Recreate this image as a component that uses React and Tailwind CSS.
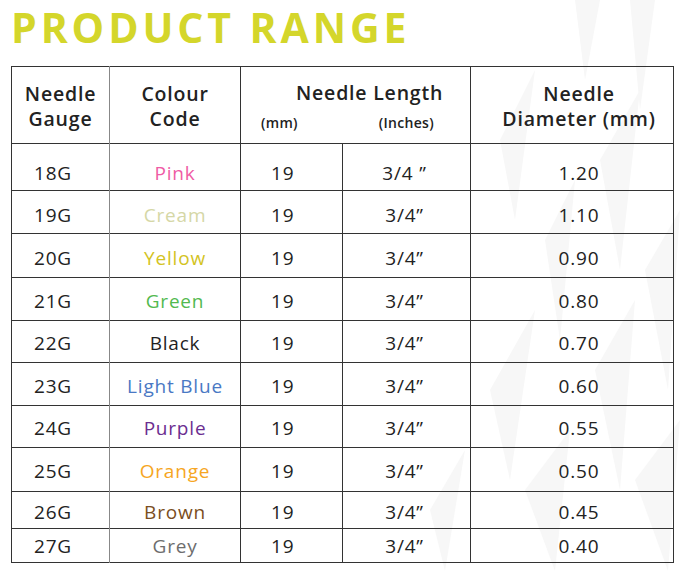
import React from "react";

const rows = [
  { gauge: "18G", colour: "Pink", color: "text-[#ef5ba5]", inch: "3/4 ”", dia: "1.20", h: "h-[47px]", pt: "pt-[12px]" },
  { gauge: "19G", colour: "Cream", color: "text-[#d5d7a6]", inch: "3/4”", dia: "1.10", h: "h-[43px]", pt: "pt-[6px]" },
  { gauge: "20G", colour: "Yellow", color: "text-[#d3c323]", inch: "3/4”", dia: "0.90", h: "h-[44px]", pt: "pt-[6px]" },
  { gauge: "21G", colour: "Green", color: "text-[#52b94f]", inch: "3/4”", dia: "0.80", h: "h-[43px]", pt: "pt-[4px]" },
  { gauge: "22G", colour: "Black", color: "text-[#1f1f1f]", inch: "3/4”", dia: "0.70", h: "h-[42px]", pt: "pt-[4px]" },
  { gauge: "23G", colour: "Light Blue", color: "text-[#4a78c4]", inch: "3/4”", dia: "0.60", h: "h-[43px]", pt: "pt-[4px]" },
  { gauge: "24G", colour: "Purple", color: "text-[#6b2d90]", inch: "3/4”", dia: "0.55", h: "h-[42px]", pt: "pt-[4px]" },
  { gauge: "25G", colour: "Orange", color: "text-[#f6a623]", inch: "3/4”", dia: "0.50", h: "h-[44px]", pt: "pt-[4px]" },
  { gauge: "26G", colour: "Brown", color: "text-[#7a4e21]", inch: "3/4”", dia: "0.45", h: "h-[37px]", pt: "pt-[4px]" },
  { gauge: "27G", colour: "Grey", color: "text-[#6d6d6d]", inch: "3/4”", dia: "0.40", h: "h-[34px]", pt: "pt-[1px]" },
];

// faint slanted streaks behind the table
const Backdrop = () => (
  <svg className="absolute inset-0 w-full h-full" viewBox="0 0 680 571" preserveAspectRatio="none">
    <g fill="#f7f7f7">
      <polygon points="575,0 600,0 585,80" />
      <polygon points="630,0 655,0 640,110" />
      <polygon points="500,140 535,70 515,220" />
      <polygon points="600,160 640,90 620,270" />
      <polygon points="545,240 575,180 560,340" />
      <polygon points="645,270 680,210 668,390" />
      <polygon points="490,390 535,310 510,480" />
      <polygon points="595,370 635,300 620,490" />
      <polygon points="525,490 570,430 555,571" />
      <polygon points="635,480 680,420 668,571" />
      <polygon points="430,510 465,450 445,571" />
    </g>
  </svg>
);

export default function App() {
  return (
    <div className="relative w-[680px] h-[571px] bg-white overflow-hidden font-['Open_Sans',sans-serif] text-[#222]">
      <Backdrop />
      <div className="relative pt-[3px] pl-[11px]">
        <h1 className="text-[41px] leading-[48px] font-bold tracking-[3.9px] text-[#d4d62b]">PRODUCT RANGE</h1>
        <table className="mt-[15px] border-collapse table-fixed w-[662px] border-[1.5px] border-[#333]">
          <colgroup>
            <col className="w-[98px]" />
            <col className="w-[131px]" />
            <col className="w-[102px]" />
            <col className="w-[128px]" />
            <col className="w-[203px]" />
          </colgroup>
          <thead>
            <tr className="h-[77px] border-b-[1.5px] border-[#333] tracking-[0.8px]">
              <th className="border-r-[1.5px] border-[#888] font-semibold text-[19.5px] leading-[25px] align-middle pt-[2px]">
                Needle
                <br />
                Gauge
              </th>
              <th className="border-r-[1.5px] border-[#333] font-semibold text-[19.5px] leading-[25px] align-middle pt-[2px]">
                Colour
                <br />
                Code
              </th>
              <th colSpan={2} className="border-r-[1.5px] border-[#333] font-semibold align-top p-0">
                <div className="pt-[13px] pl-[55px] text-left text-[19.5px] leading-[25px]">Needle Length</div>
                <div className="flex mt-[9px] text-[14px] leading-[18px] tracking-[0.3px]">
                  <div className="w-[102px] pl-[20px] text-left">(mm)</div>
                  <div className="w-[128px] text-center">(Inches)</div>
                </div>
              </th>
              <th className="font-semibold text-[19.5px] leading-[25px] align-middle pt-[2px] pl-[14px]">
                Needle
                <br />
                Diameter (mm)
              </th>
            </tr>
          </thead>
          <tbody className="text-[19px] tracking-[0.8px]">
            {rows.map((r, i) => (
              <tr key={r.gauge} className={`${r.h} ${i < rows.length - 1 ? "border-b-[1.5px] border-[#333]" : ""}`}>
                <td className={`border-r-[1.5px] border-[#888] pl-[22px] ${r.pt}`}>{r.gauge}</td>
                <td className={`border-r-[1.5px] border-[#333] text-center ${r.pt} ${r.color}`}>{r.colour}</td>
                <td className={`border-r-[1.5px] border-[#333] pl-[30px] ${r.pt}`}>19</td>
                <td className={`border-r-[1.5px] border-[#333] text-center pr-[4px] ${r.pt}`}>{r.inch}</td>
                <td className={`text-center pl-[14px] ${r.pt}`}>{r.dia}</td>
              </tr>
            ))}
          </tbody>
        </table>
      </div>
    </div>
  );
}
